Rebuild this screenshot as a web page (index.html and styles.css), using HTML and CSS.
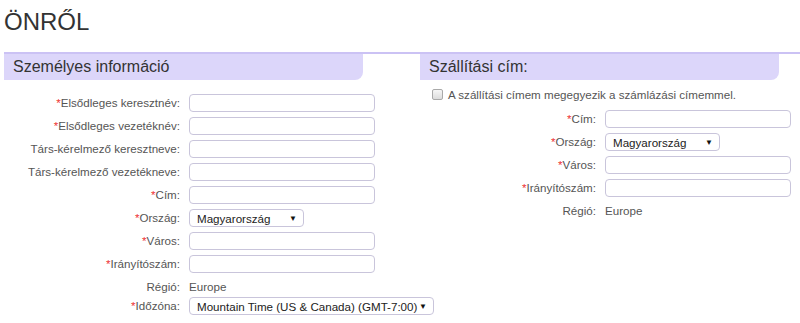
FILE: index.html
```html
<!DOCTYPE html>
<html>

<head lang="hu">
    <meta charset="UTF-8">
    <title>Önről</title>
    <link rel="stylesheet" href="styles.css">
</head>

<body>
    <h1 class="page-title">ÖNRŐL</h1>

    <div class="cols">
        <!-- bal oldal: személyes adatok -->
        <div class="col">
            <h2 class="bar">Személyes információ</h2>
            <div class="form">
                <label class="lbl"><span class="req">*</span>Elsődleges keresztnév:</label>
                <span class="field"></span>

                <label class="lbl"><span class="req">*</span>Elsődleges vezetéknév:</label>
                <span class="field"></span>

                <label class="lbl">Társ-kérelmező keresztneve:</label>
                <span class="field"></span>

                <label class="lbl">Társ-kérelmező vezetékneve:</label>
                <span class="field"></span>

                <label class="lbl"><span class="req">*</span>Cím:</label>
                <span class="field"></span>

                <label class="lbl"><span class="req">*</span>Ország:</label>
                <span class="field select country"><span>Magyarország</span><span class="arrow">▼</span></span>

                <label class="lbl"><span class="req">*</span>Város:</label>
                <span class="field"></span>

                <label class="lbl"><span class="req">*</span>Irányítószám:</label>
                <span class="field"></span>

                <label class="lbl text-row">Régió:</label>
                <span class="value text-row">Europe</span>

                <label class="lbl"><span class="req">*</span>Időzóna:</label>
                <span class="field select tz"><span>Mountain Time (US &amp; Canada) (GMT-7:00)</span><span class="arrow">▼</span></span>
            </div>
        </div>

        <!-- jobb oldal: szállítási cím -->
        <div class="col">
            <h2 class="bar">Szállítási cím:</h2>
            <div class="same">
                <span class="check"></span>
                <span>A szállítási címem megegyezik a számlázási címemmel.</span>
            </div>
            <div class="form form-right">
                <label class="lbl"><span class="req">*</span>Cím:</label>
                <span class="field"></span>

                <label class="lbl"><span class="req">*</span>Ország:</label>
                <span class="field select country"><span>Magyarország</span><span class="arrow">▼</span></span>

                <label class="lbl"><span class="req">*</span>Város:</label>
                <span class="field"></span>

                <label class="lbl"><span class="req">*</span>Irányítószám:</label>
                <span class="field"></span>

                <label class="lbl text-row">Régió:</label>
                <span class="value text-row">Europe</span>
            </div>
        </div>
    </div>
</body>

</html>
```

FILE: styles.css
```css
* {
    margin: 0;
    padding: 0;
    box-sizing: border-box;
}

body {
    background: #fff;
    font-family: "Liberation Sans", Arial, sans-serif;
    color: #555;
    padding-left: 4px;
}

.page-title {
    margin-top: 8px;
    font-size: 24px;
    line-height: 27px;
    font-weight: normal;
    color: #333;
}

.cols {
    margin-top: 17px;
    border-top: 2px solid #cbc2f4;
    display: grid;
    grid-template-columns: 416px 1fr;
}

.bar {
    width: 359px;
    height: 26px;
    line-height: 26px;
    padding-left: 9px;
    background-color: #dcd6fa;
    border-bottom-right-radius: 8px;
    font-size: 16px;
    font-weight: normal;
    color: #333;
}

.form {
    margin-top: 14px;
    display: grid;
    grid-template-columns: 176px auto;
    column-gap: 9px;
    row-gap: 5px;
    justify-items: start;
    font-size: 11.6px;
}

.form-right {
    margin-top: 7px;
}

.lbl {
    justify-self: end;
    line-height: 18px;
    white-space: nowrap;
}

.req {
    color: #e33;
}

/* sor beviteli mező nélkül */
.text-row {
    line-height: 18px;
    margin-bottom: -4px;
}

.value {
    color: #555;
}

.field {
    display: block;
    width: 186px;
    height: 18px;
    border: 1px solid #c9c5db;
    border-radius: 4px;
    background: #fff;
}

.select {
    display: flex;
    align-items: center;
    justify-content: space-between;
    padding: 0 6px 0 7px;
    color: #222;
    font-size: 11.6px;
    white-space: nowrap;
}

.select .arrow {
    font-size: 8px;
    color: #111;
}

.country {
    width: 115px;
}

.tz {
    width: 245px;
}

.same {
    margin-top: 5px;
    padding-left: 12px;
    height: 18px;
    display: flex;
    align-items: center;
    gap: 5px;
    font-size: 11.6px;
    color: #555;
}

.check {
    width: 11px;
    height: 11px;
    border: 1px solid #a9a9a9;
    border-radius: 2px;
    background: linear-gradient(#f6f6f6, #dcdcdc);
}
```
